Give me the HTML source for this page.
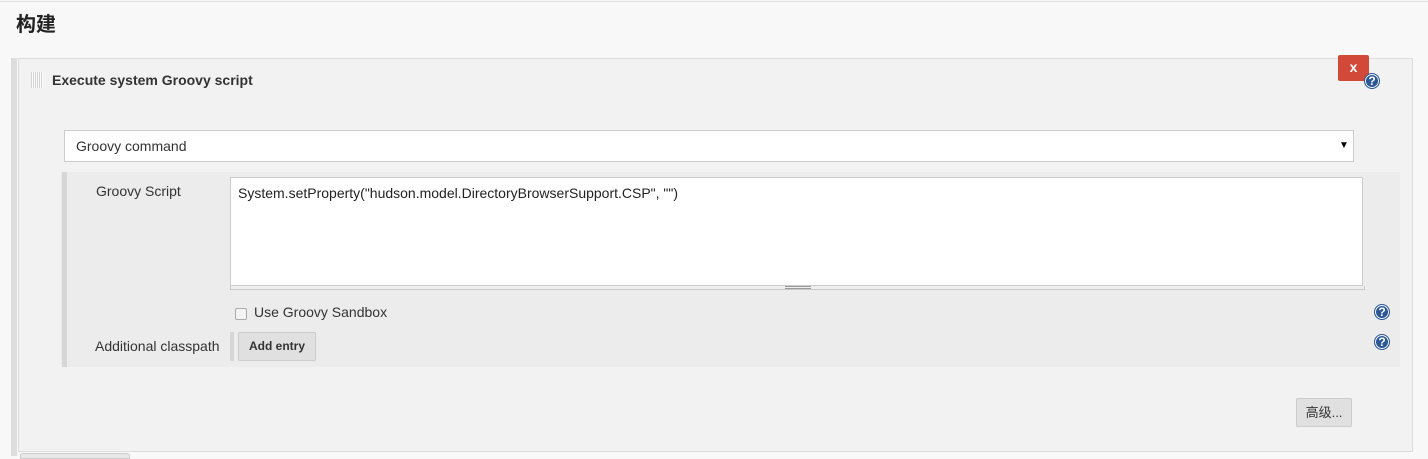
<!DOCTYPE html>
<html><head><meta charset="utf-8"><style>
body{margin:0;width:1428px;height:456px;background:#f8f8f8;font-family:"Liberation Sans","Noto Sans CJK SC",sans-serif;font-size:14px;color:#333;position:relative;overflow:hidden}
.a{position:absolute}
.help{position:absolute;width:14px;height:14px;border-radius:50%;background:#2b5797;border:1px solid #2b5797;box-shadow:0 0 0 1px #fff inset;color:#fff;font:bold 12px "Liberation Sans",sans-serif;text-align:center;line-height:14px}
.btn{position:absolute;background:#e0e0e0;border:1px solid #ccc;border-radius:2px;font-size:12px;color:#333;text-align:center}
</style></head><body>
<div class="a" style="left:0;top:1px;width:1428px;height:1px;background:#ddd"></div>
<div class="a" style="left:16px;top:8px;font-size:20px;font-weight:bold;color:#222">构建</div>
<div class="a" style="left:11px;top:58px;width:6px;height:398px;background:#ddd"></div>
<div class="a" style="left:18px;top:58px;width:1393px;height:392px;background:#f2f2f2;border:1px solid #ddd"></div>
<div class="a" style="left:31px;top:72px;width:12px;height:16px;background:repeating-linear-gradient(90deg,#ccc 0 1px,transparent 1px 2px),#fff;opacity:.8"></div>
<div class="a" style="left:52px;top:72px;font-weight:bold;font-size:14px;color:#333">Execute system Groovy script</div>
<div class="a" style="left:1338px;top:55px;width:31px;height:26px;background:#d24939;border-radius:2px;color:#fff;font-weight:bold;font-size:14px;text-align:center;line-height:24px">x</div>
<div class="help" style="left:1364px;top:73px">?</div>
<div class="a" style="left:64px;top:130px;width:1288px;height:30px;background:#fff;border:1px solid #ccc"></div>
<div class="a" style="left:76px;top:138px">Groovy command</div>
<div class="a" style="left:1339px;top:140px;font-size:10px;color:#000">▼</div>
<div class="a" style="left:61px;top:172px;width:1339px;height:195px;background:#ececec"></div>
<div class="a" style="left:62px;top:172px;width:5px;height:195px;background:#d6d6d6"></div>
<div class="a" style="left:96px;top:183px">Groovy Script</div>
<div class="a" style="left:230px;top:177px;width:1131px;height:107px;background:#fff;border:1px solid #ccc"></div>
<div class="a" style="left:230px;top:286px;width:1133px;height:3px;background:#eee;border:1px solid #c8c8c8;border-top:none"></div>
<div class="a" style="left:785px;top:286px;width:26px;border-top:1px solid #999;border-bottom:1px solid #999;height:1px"></div>
<div class="a" style="left:238px;top:185px;color:#222">System.setProperty("hudson.model.DirectoryBrowserSupport.CSP", "")</div>
<div class="a" style="left:235px;top:308px;width:10px;height:10px;border:1px solid #aaa;border-radius:2px;background:#f4f4f4"></div>
<div class="a" style="left:254px;top:304px;font-size:14px">Use Groovy Sandbox</div>
<div class="a" style="left:95px;top:338px">Additional classpath</div>
<div class="a" style="left:230px;top:332px;width:4px;height:29px;background:#d6d6d6"></div>
<div class="btn" style="left:238px;top:332px;width:76px;height:27px;line-height:27px;font-weight:bold">Add entry</div>
<div class="help" style="left:1374px;top:304px">?</div>
<div class="help" style="left:1374px;top:334px">?</div>
<div class="btn" style="left:1296px;top:398px;width:54px;height:27px;line-height:27px;font-size:13px">高级...</div>
<div class="a" style="left:20px;top:453px;width:108px;height:4px;background:#e8e8e8;border:1px solid #ccc;border-radius:3px 3px 0 0"></div>
</body></html>
